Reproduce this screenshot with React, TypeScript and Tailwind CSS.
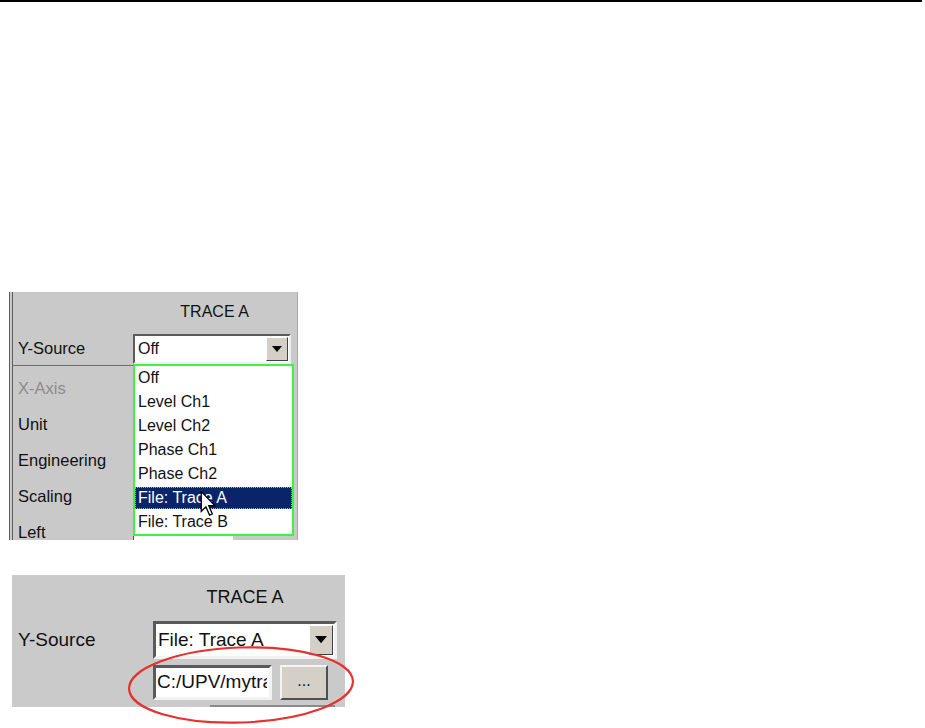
import React from "react"

const font = { fontFamily: '"Liberation Sans", Arial, sans-serif' }

function DownArrow({ size }: { size: number }) {
  return (
    <svg width={size} height={size * 0.6} viewBox="0 0 10 6">
      <path d="M0 0 H10 L5 6 Z" fill="#000" />
    </svg>
  )
}

function Cursor() {
  return (
    <svg width="17" height="25" viewBox="0 0 12 19" className="absolute left-[187px] top-[199px]">
      <path d="M0.5 0.5 V15.5 L4 12 L6.8 18.3 L8.9 17.4 L6.2 11.2 H11 Z" fill="#fff" stroke="#000" strokeWidth="1" strokeLinejoin="miter" />
    </svg>
  )
}

const items = ["Off", "Level Ch1", "Level Ch2", "Phase Ch1", "Phase Ch2", "File: Trace A", "File: Trace B"]

function PanelOne() {
  return (
    <div className="relative ml-[9px] mt-[290px] h-[248px] w-[289px] overflow-hidden border-l-[4px] border-r border-double border-l-[#5e5e5e] border-r-[#a8a8a8] bg-[#c9c9c9] text-[#111]">
      <div className="flex h-[40px] items-center">
        <div className="w-[120px]" />
        <div className="w-[166px] text-center text-[16px]">TRACE A</div>
      </div>
      <div className="flex h-[33px] items-center">
        <div className="w-[120px] pl-[5px] text-[16.5px]">Y-Source</div>
        <div className="flex h-[30px] w-[158px] border-2 border-b-[#efefef] border-l-[#5a5a5a] border-r-[#efefef] border-t-[#5a5a5a] bg-white">
          <div className="flex flex-1 items-center pl-[3px] text-[16px]">Off</div>
          <div className="m-[1px] flex w-[22px] items-center justify-center border border-b-[#404040] border-l-white border-r-[#404040] border-t-white bg-[#d4d0c8]">
            <DownArrow size={10} />
          </div>
        </div>
      </div>
      <div className="h-px w-[120px] bg-[#6f6f6f]" />
      <div className="pt-[4px] text-[16.5px]">
        <div className="flex h-[36px] items-center pl-[5px] text-[#8c8c8c]">X-Axis</div>
        <div className="flex h-[36px] items-center pl-[5px]">Unit</div>
        <div className="flex h-[36px] items-center pl-[5px]">Engineering</div>
        <div className="flex h-[36px] items-center pl-[5px]">Scaling</div>
        <div className="flex h-[36px] items-center pl-[5px]">Left</div>
      </div>

      <div className="absolute left-[120px] top-[244px] h-[6px] w-[100px] border-l border-[#555] bg-white" />

      <div className="absolute left-[120px] top-[72px] w-[161px] border-2 border-[#3cf43c] bg-white text-[16px]">
        {items.map((it) =>
          it === "File: Trace A" ? (
            <div key={it} className="flex h-[24px] items-center py-[1px]">
              <div className="flex h-full w-full items-center border border-dotted border-[#c8b060] bg-[#0a246a] pl-[2px] text-white">
                {it}
              </div>
            </div>
          ) : (
            <div key={it} className="flex h-[24px] items-center pl-[3px]">
              {it}
            </div>
          )
        )}
      </div>
      <Cursor />
    </div>
  )
}

function PanelTwo() {
  return (
    <div className="ml-[12px] mt-[35px] h-[132px] w-[333px] bg-[#cacaca] text-[#111]">
      <div className="flex h-[44px] items-center">
        <div className="w-[141px]" />
        <div className="w-[184px] text-center text-[18px]">TRACE A</div>
      </div>
      <div className="flex h-[42px] items-center">
        <div className="w-[141px] pl-[6px] text-[19px]">Y-Source</div>
        <div className="flex h-[38px] w-[184px] border-[3px] border-b-[#f2f2f2] border-l-[#5a5a5a] border-r-[#f2f2f2] border-t-[#5a5a5a] bg-white">
          <div className="flex flex-1 items-center overflow-hidden whitespace-nowrap pl-[2px] text-[19px]">File: Trace A</div>
          <div className="m-[1px] flex w-[24px] items-center justify-center border border-b-[#404040] border-l-white border-r-[#404040] border-t-white bg-[#d4d0c8]">
            <DownArrow size={12} />
          </div>
        </div>
      </div>
      <div className="mt-[4px] flex h-[35px]">
        <div className="w-[141px]" />
        <div className="flex w-[119px] items-center overflow-hidden whitespace-nowrap border-[3px] border-b-[#f2f2f2] border-l-[#5a5a5a] border-r-[#f2f2f2] border-t-[#5a5a5a] bg-white pl-[1px] text-[19px]">
          <span className="block w-[110px] overflow-hidden">C:/UPV/mytra</span>
        </div>
        <div className="ml-[8px] flex w-[48px] items-center justify-center border-2 border-b-[#505050] border-l-[#f4f4f4] border-r-[#505050] border-t-[#f4f4f4] bg-[#d4d0c8] pb-[4px] text-[16px]">
          ...
        </div>
      </div>
      <div className="ml-[198px] mt-[5px] h-[2px] w-[125px] bg-[#8a8a8a]" />
    </div>
  )
}

export default function App() {
  return (
    <div className="relative h-[728px] w-[925px] overflow-hidden bg-white" style={font}>
      <div className="h-[2px] w-[922px] bg-black" />
      <PanelOne />
      <PanelTwo />
      <svg className="absolute left-[124px] top-[643px]" width="234" height="84" viewBox="0 0 234 84">
        <ellipse cx="117" cy="42" rx="112" ry="37.5" fill="none" stroke="#e5322d" strokeWidth="2.2" transform="rotate(-2 117 42)" />
      </svg>
    </div>
  )
}
